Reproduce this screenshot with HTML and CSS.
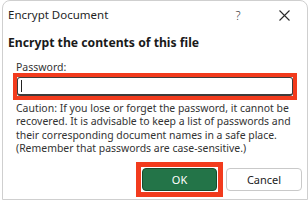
FILE: index.html
```html
<!DOCTYPE html>
<html>
<head>
<meta charset="utf-8">
<link rel="stylesheet" href="styles.css">
</head>
<body>
<div class="dialog">
  <div class="titlebar">
    <span class="title">Encrypt Document</span>
    <span class="cap help">?</span>
    <span class="cap close">
      <svg width="11" height="11" viewBox="0 0 11 11"><path d="M0.5 0.5 L10.5 10.5 M10.5 0.5 L0.5 10.5" stroke="#2b2b2b" stroke-width="1.1" fill="none"/></svg>
    </span>
  </div>
  <div class="content">
    <div class="heading">Encrypt the contents of this file</div>
    <div class="group">
      <div class="label">Password:</div>
      <div class="field-hl">
        <div class="input"><span class="caret"></span></div>
      </div>
      <p class="caution">Caution: If you lose or forget the password, it cannot be<br>recovered. It is advisable to keep a list of passwords and<br>their corresponding document names in a safe place.<br>(Remember that passwords are case-sensitive.)</p>
    </div>
    <div class="actions">
      <div class="btn-hl"><button class="btn primary">OK</button></div>
      <button class="btn secondary">Cancel</button>
    </div>
  </div>
</div>
</body>
</html>
```
FILE: styles.css
```css
html, body {
  margin: 0;
  padding: 0;
  background: #ffffff;
}
body {
  font-family: "Noto Sans", "Open Sans", sans-serif;
  color: #1f1f1f;
  width: 308px;
  height: 201px;
  overflow: hidden;
}
.dialog {
  margin-left: 2px;
  width: 304px;
  height: 198px;
  border: 1px solid #cfcfcf;
  border-radius: 8px 8px 0 0;
  background: #ffffff;
}
.titlebar {
  display: flex;
  align-items: center;
  height: 28px;
}
.title {
  flex: 1;
  padding-left: 5px;
  font-size: 11.5px;
  line-height: 14px;
  color: #1f1f1f;
}
.cap {
  width: 46px;
  height: 28px;
  display: flex;
  align-items: center;
  justify-content: center;
}
.help {
  font-size: 12px;
  font-weight: 300;
  color: #333;
  padding-top: 1px;
}
.close svg {
  display: block;
}
.content {
  padding: 0 5px;
}
.heading {
  margin-top: 6px;
  padding-left: 0;
  font-size: 12.2px;
  line-height: 16px;
  font-weight: 700;
  color: #1a1a1a;
}
.group {
  margin-left: 8px;
}
.label {
  margin-top: 11px;
  font-size: 10.5px;
  line-height: 11px;
  color: #333;
}
.field-hl {
  margin-left: -3px;
  width: 276px;
  border: 4px solid #f23b1d;
}
.input {
  height: 16px;
  border: 1.5px solid #3c3c3c;
  border-bottom-width: 2.5px;
  border-radius: 3px;
  background: #fff;
  position: relative;
}
.caret {
  position: absolute;
  left: 3px;
  top: 2px;
  width: 1px;
  height: 12px;
  background: #222;
}
.caution {
  margin: 2px 0 0 0;
  font-size: 10.45px;
  line-height: 13.4px;
  color: #333;
  white-space: nowrap;
}
.actions {
  margin-top: 6px;
  display: flex;
  justify-content: flex-end;
  align-items: center;
  gap: 3px;
}
.btn-hl {
  border: 5px solid #f23b1d;
  padding: 1px;
  display: flex;
}
.btn {
  font-family: "Noto Sans", "Open Sans", sans-serif;
  font-size: 11px;
  font-weight: 400;
  width: 76px;
  height: 23px;
  border-radius: 4px;
  padding: 0;
  margin: 0;
}
.primary {
  width: 75px;
  background: #237448;
  border: 1px solid #164b2d;
  color: #ffffff;
}
.secondary {
  background: #ffffff;
  border: 1px solid #c9c9c9;
  color: #222;
}
```
